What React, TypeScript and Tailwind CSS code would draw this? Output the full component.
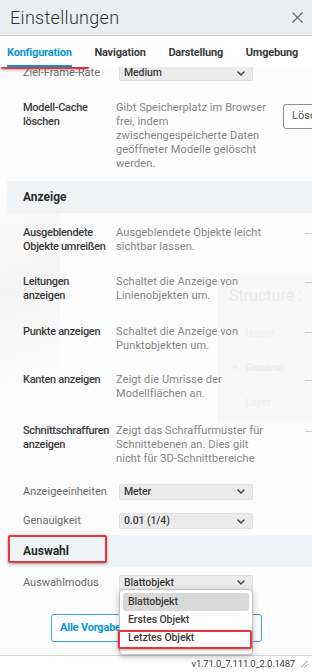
import type { ReactNode } from "react";

function Chevron() {
  return (
    <svg width="8" height="5" viewBox="0 0 8 5" fill="none" stroke="#3c3c3c"
      strokeWidth="1.4" strokeLinecap="round" strokeLinejoin="round" aria-hidden="true">
      <polyline points="1 1 4 4 7 1" />
    </svg>
  );
}

function Select({ value }: { value: string }) {
  return (
    <div className="h-[16px] w-[134px] shrink-0 flex items-center justify-between pl-[4px] pr-[7px] bg-[#ebebeb] border border-[#e0e0e0] rounded-[2px] text-[10.5px] font-medium text-[#3c3c3c] tracking-[-0.1px]">
      <span>{value}</span>
      <Chevron />
    </div>
  );
}

function SelectRow({ label, value, className }: { label: string; value: string; className: string }) {
  return (
    <div className={`flex items-center pl-[23px] ${className}`}>
      <span className="w-[96px] shrink-0 text-[11px] text-[#6b6b6b]">{label}</span>
      <Select value={value} />
    </div>
  );
}

function Lines({ lines, className }: { lines: string[]; className: string }) {
  return (
    <div className={`shrink-0 ${className}`}>
      {lines.map((l) => (
        <div key={l} className="h-[14px] whitespace-nowrap">{l}</div>
      ))}
    </div>
  );
}

const labelCls = "w-[93px] font-medium text-[#3c3c3c] tracking-[-0.3px]";
const descCls = "text-[#858585] tracking-[0.1px]";

function ToggleRow({ label, desc, className }: { label: string[]; desc: string[]; className: string }) {
  return (
    <div className={`flex pl-[23px] leading-[14px] text-[11px] ${className}`}>
      <Lines lines={label} className={labelCls} />
      <Lines lines={desc} className={`w-[150px] ${descCls}`} />
      {/* toggle edge peeking in from the right */}
      <div className="ml-auto mt-[7px] w-[7px] h-px bg-[#cfcfcf]" />
    </div>
  );
}

function Section({ children, className }: { children: ReactNode; className: string }) {
  return (
    <div className={`ml-[7px] h-[32px] flex items-center pl-[16px] bg-[#f1f4f7] text-[12px] font-bold text-[#2b2b2b] ${className}`}>
      {children}
    </div>
  );
}

function RedBox({ className }: { className: string }) {
  return (
    <div className={`absolute border-2 border-[#e3373d] rounded-[2px] shadow-[0_1px_3px_rgba(0,0,0,0.35)] pointer-events-none ${className}`} />
  );
}

export default function App() {
  return (
    <div className="relative w-[312px] h-[672px] overflow-hidden flex flex-col bg-white font-['Roboto',sans-serif]">
      {/* Header */}
      <div className="h-[36px] shrink-0 flex items-center justify-between pl-[10px] pr-[9px] bg-[#eceff1] border-b border-[#c9cccf]">
        <span className="text-[18px] font-light text-[#333] tracking-[0.3px]">Einstellungen</span>
        <svg width="11" height="11" viewBox="0 0 11 11" fill="none" stroke="#6e6e6e" strokeWidth="1.2" aria-hidden="true">
          <line x1="0.5" y1="0.5" x2="10.5" y2="10.5" />
          <line x1="10.5" y1="0.5" x2="0.5" y2="10.5" />
        </svg>
      </div>

      {/* Tabs */}
      <div className="relative z-10 h-[31px] shrink-0 flex items-end justify-between pl-[7px] pr-[14px] bg-white text-[11px] font-bold text-[#3c3c3c] tracking-[-0.2px]">
        <div className="flex flex-col">
          <span className="text-[#0696d7] leading-[14px] mb-[5px]">Konfiguration</span>
          <div className="h-[2px] bg-[#0696d7]" />
        </div>
        <span className="leading-[14px] mb-[7px]">Navigation</span>
        <span className="leading-[14px] mb-[7px]">Darstellung</span>
        <span className="leading-[14px] mb-[7px]">Umgebung</span>
      </div>

      {/* Scrolled body */}
      <div className="relative flex-1 overflow-hidden bg-[#fcfcfc]">
        {/* faint app content seen through the panel */}
        <div className="absolute left-[218px] top-[206px] w-[94px] h-[150px] bg-[#f8f8f8] border-l border-[#f1f1f1]">
          <div className="pl-[10px] pt-[11px] text-[16px] text-[#ebebeb]">Structure :</div>
          <div className="pl-[26px] mt-[18px] text-[11px] text-[#eeeeee]">Name</div>
          <div className="flex items-center pl-[12px] mt-[17px] text-[11px] font-bold text-[#ededed]">
            <span className="w-[14px] text-[8px]">▼</span>General
          </div>
          <div className="pl-[26px] mt-[19px] text-[11px] text-[#eeeeee]">Layer</div>
        </div>
        <div className="absolute left-0 top-[30px] w-[60px] h-[420px] bg-[linear-gradient(160deg,transparent_20%,#f4f4f4_45%,transparent_70%)]" />

        <div className="relative flex flex-col">
          <SelectRow label="Ziel-Frame-Rate" value="Medium" className="mt-[-2px]" />

          <div className="flex pl-[23px] mt-[19px] leading-[14px] text-[11px]">
            <Lines lines={["Modell-Cache", "löschen"]} className={labelCls} />
            <Lines
              lines={["Gibt Speicherplatz im Browser", "frei, indem", "zwischengespeicherte Daten", "geöffneter Modelle gelöscht", "werden."]}
              className={`w-[167px] ${descCls}`}
            />
            <div className="mt-[3px] h-[25px] w-[70px] shrink-0 flex items-center pl-[8px] border border-[#8c8c8c] rounded-[3px] bg-white text-[11px] text-[#555]">
              Löschen
            </div>
          </div>

          <Section className="mt-[10px]">Anzeige</Section>

          <ToggleRow label={["Ausgeblendete", "Objekte umreißen"]} desc={["Ausgeblendete Objekte leicht", "sichtbar lassen."]} className="mt-[13px]" />
          <ToggleRow label={["Leitungen", "anzeigen"]} desc={["Schaltet die Anzeige von", "Linienobjekten um."]} className="mt-[21px]" />
          <ToggleRow label={["Punkte anzeigen"]} desc={["Schaltet die Anzeige von", "Punktobjekten um."]} className="mt-[22px]" />
          <ToggleRow label={["Kanten anzeigen"]} desc={["Zeigt die Umrisse der", "Modellflächen an."]} className="mt-[20px]" />
          <ToggleRow
            label={["Schnittschraffuren", "anzeigen"]}
            desc={["Zeigt das Schraffurmuster für", "Schnittebenen an. Dies gilt", "nicht für 3D-Schnittbereiche"]}
            className="mt-[23px]"
          />

          <SelectRow label="Anzeigeeinheiten" value="Meter" className="mt-[18px]" />
          <SelectRow label="Genauigkeit" value="0.01 (1/4)" className="mt-[13px]" />

          <Section className="mt-[5px]">Auswahl</Section>

          <SelectRow label="Auswahlmodus" value="Blattobjekt" className="mt-[8px]" />

          <div className="ml-[51px] mt-[23px] h-[28px] w-[211px] flex items-center pl-[8px] border border-[#38a8dc] rounded-[3px] bg-white text-[11px] font-bold text-[#0696d7] tracking-[-0.2px]">
            Alle Vorgabeeinstellungen
          </div>
        </div>
      </div>

      {/* Footer */}
      <div className="h-[17px] shrink-0 flex items-center justify-end pr-[4px] gap-[5px] border-t border-[#d4d4d4] bg-white text-[9.5px] text-[#3c3c3c] tracking-[-0.2px]">
        <span>v1.71.0_7.111.0_2.0.1487</span>
        <svg width="8" height="8" viewBox="0 0 8 8" stroke="#9a9a9a" strokeWidth="1" aria-hidden="true">
          <line x1="1" y1="7.5" x2="7.5" y2="1" />
          <line x1="4.5" y1="7.5" x2="7.5" y2="4.5" />
        </svg>
      </div>

      {/* Open dropdown */}
      <div className="absolute left-[119px] top-[589px] w-[134px] h-[66px] p-[3px] bg-white border border-[#c4c4c4] rounded-[4px] shadow-[0_2px_6px_rgba(0,0,0,0.25)] text-[10.5px] font-medium text-[#3c3c3c] tracking-[-0.1px]">
        <div className="h-[18px] flex items-center pl-[5px] bg-[#d9d9d9] rounded-[3px]">Blattobjekt</div>
        <div className="h-[18px] flex items-center pl-[5px]">Erstes Objekt</div>
        <div className="h-[18px] flex items-center pl-[5px]">Letztes Objekt</div>
      </div>

      {/* Highlight marks */}
      <RedBox className="left-[1px] top-[40px] w-[88px] h-[29px]" />
      <RedBox className="left-[8px] top-[535px] w-[99px] h-[28px]" />
      <RedBox className="left-[118px] top-[630px] w-[134px] h-[19px]" />
    </div>
  );
}
